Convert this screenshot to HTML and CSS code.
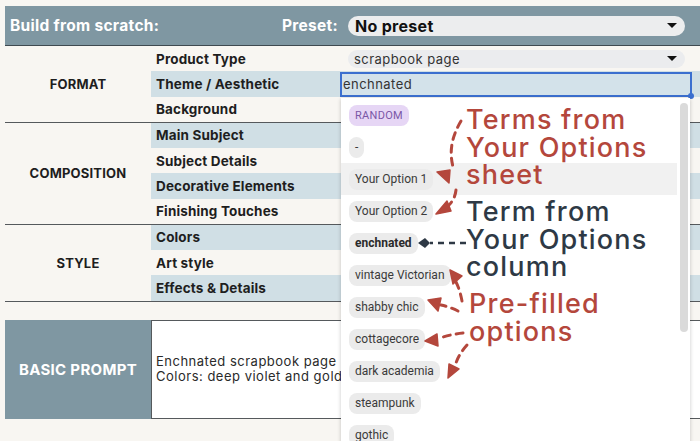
FILE: index.html
```html
<!DOCTYPE html>
<html lang="en">
<head>
<meta charset="utf-8">
<title>Prompt Builder</title>
<link rel="stylesheet" href="styles.css">
</head>
<body>
<main class="page">
  <div class="builder">
    <header class="bar">
      <div class="bar-title">Build from scratch:</div>
      <div class="bar-preset">Preset:</div>
      <div class="bar-cell">
        <div class="bar-select"><span>No preset</span><span class="caret"></span></div>
      </div>
    </header>

    <section class="group g3">
      <div class="group-name">FORMAT</div>
      <div class="field">Product Type</div>
      <div class="value"><div class="select"><span>scrapbook page</span><span class="caret"></span></div></div>
      <div class="field alt">Theme / Aesthetic</div>
      <div class="value alt"><div class="input">enchnated<span class="handle"></span></div></div>
      <div class="field">Background</div>
      <div class="value"></div>
    </section>

    <section class="group g4">
      <div class="group-name">COMPOSITION</div>
      <div class="field alt">Main Subject</div>
      <div class="value alt"></div>
      <div class="field">Subject Details</div>
      <div class="value"></div>
      <div class="field alt">Decorative Elements</div>
      <div class="value alt"></div>
      <div class="field">Finishing Touches</div>
      <div class="value"></div>
    </section>

    <section class="group g3">
      <div class="group-name">STYLE</div>
      <div class="field alt">Colors</div>
      <div class="value alt"></div>
      <div class="field">Art style</div>
      <div class="value"></div>
      <div class="field alt">Effects &amp; Details</div>
      <div class="value alt"></div>
    </section>
  </div>

  <div class="prompt">
    <div class="prompt-label">BASIC PROMPT</div>
    <div class="prompt-text">Enchnated scrapbook page<br>Colors: deep violet and gold</div>
  </div>
</main>

<div class="menu">
  <ul class="menu-list">
    <li class="item"><span class="chip chip-random">RANDOM</span></li>
    <li class="item"><span class="chip">-</span></li>
    <li class="item hover"><span class="chip">Your Option 1</span></li>
    <li class="item"><span class="chip">Your Option 2</span></li>
    <li class="item"><span class="chip chip-bold">enchnated</span></li>
    <li class="item"><span class="chip">vintage Victorian</span></li>
    <li class="item"><span class="chip">shabby chic</span></li>
    <li class="item"><span class="chip">cottagecore</span></li>
    <li class="item"><span class="chip">dark academia</span></li>
    <li class="item"><span class="chip">steampunk</span></li>
    <li class="item"><span class="chip">gothic</span></li>
  </ul>
  <div class="scroll-thumb"></div>
</div>

<div class="note note-sheet">Terms from<br>Your Options<br>sheet</div>
<div class="note note-column">Term from<br>Your Options<br>column</div>
<div class="note note-prefill">Pre-filled<br>options</div>

<svg class="arrows" width="700" height="441" viewBox="0 0 700 441">
  <g class="red-line">
    <path d="M461 121 Q446 146 454 170"/>
    <path d="M456 190 Q455 199 449 205"/>
    <path d="M462 301 Q460 290 456 282"/>
    <path d="M458 311 Q450 307 441 305"/>
    <path d="M463 333 Q452 334 440 338"/>
    <path d="M467 345 Q458 355 455 366"/>
  </g>
  <g class="red-head">
    <polygon points="437,172 450,170 449,183"/>
    <polygon points="436,214 447,201 451,211"/>
    <polygon points="450,270 462,276 453,284"/>
    <polygon points="428,300 441,298 438,311"/>
    <polygon points="425,341 437,334 438,346"/>
    <polygon points="448,378 449,364 459,369"/>
  </g>
  <path class="dark-line" d="M466 243 L430 243"/>
  <polygon class="dark-head" points="418,243 425,238 430,243 425,248"/>
</svg>
</body>
</html>
```

FILE: styles.css
```css
* {
  box-sizing: border-box;
}

html, body {
  margin: 0;
  padding: 0;
}

body {
  width: 700px;
  height: 441px;
  overflow: hidden;
  position: relative;
  background: #f8f6f2;
  font-family: Inter, "Liberation Sans", sans-serif;
  color: #1e1e1e;
}

.page {
  padding: 6px 0 0 5px;
}

/* ---------- top bar ---------- */
.bar {
  display: grid;
  grid-template-columns: 146px 189px 1fr;
  align-items: center;
  height: 40px;
  background: #7f97a2;
  border-bottom: 1px solid #3f4a50;
  color: #fff;
  font-weight: 700;
  font-size: 15.5px;
  letter-spacing: 0.3px;
}

.bar-title {
  padding-left: 5px;
  white-space: nowrap;
}

.bar-preset {
  text-align: right;
  padding-right: 2px;
}

.bar-cell {
  padding: 0 15px 0 8px;
}

.bar-select {
  display: flex;
  align-items: center;
  justify-content: space-between;
  height: 20px;
  padding: 0 8px 0 7px;
  border-radius: 10px;
  background: #ecedee;
  color: #111;
  font-size: 16px;
}

.caret {
  width: 0;
  height: 0;
  border-left: 5px solid transparent;
  border-right: 5px solid transparent;
  border-top: 5px solid #111;
}

/* ---------- field groups ---------- */
.group {
  display: grid;
  grid-template-columns: 146px 189px 1fr;
  border-bottom: 1px solid #55595c;
}

.g3 {
  grid-template-rows: repeat(3, 25.25px);
}

.g4 {
  grid-template-rows: repeat(4, 25.25px);
}

.group-name {
  grid-column: 1;
  grid-row: 1 / -1;
  display: flex;
  align-items: center;
  justify-content: center;
  font-weight: 700;
  font-size: 13px;
  letter-spacing: 0.2px;
}

.field {
  grid-column: 2;
  display: flex;
  align-items: center;
  padding-left: 5px;
  font-weight: 700;
  font-size: 13.5px;
  letter-spacing: 0.15px;
  white-space: nowrap;
}

.value {
  grid-column: 3;
  display: flex;
  align-items: center;
  position: relative;
}

.alt {
  background: #d0dfe5;
}

.select {
  display: flex;
  align-items: center;
  justify-content: space-between;
  width: calc(100% - 23px);
  height: 18px;
  margin-left: 8px;
  padding: 0 8px 0 6px;
  border-radius: 9px;
  background: #ebecee;
  font-size: 13px;
  letter-spacing: 0.45px;
  color: #333;
}

.input {
  position: relative;
  align-self: stretch;
  width: calc(100% - 8px);
  margin-top: 1px;
  padding-left: 1px;
  display: flex;
  align-items: center;
  border: 2px solid #3b6fcf;
  background: #d3e2ea;
  font-size: 13px;
  letter-spacing: 0.45px;
  color: #333;
}

.handle {
  position: absolute;
  right: -4px;
  bottom: -4px;
  width: 6px;
  height: 6px;
  border-radius: 50%;
  background: #3b6fcf;
}

/* ---------- prompt ---------- */
.prompt {
  display: flex;
  margin-top: 18px;
  height: 99px;
}

.prompt-label {
  width: 146px;
  display: flex;
  align-items: center;
  justify-content: center;
  background: #7f97a2;
  color: #fff;
  font-weight: 700;
  font-size: 15px;
  letter-spacing: 0.3px;
}

.prompt-text {
  flex: 1;
  display: flex;
  flex-direction: column;
  justify-content: center;
  padding-left: 4px;
  background: #fff;
  border: 1px solid #55595c;
  border-right: 0;
  font-size: 13px;
  line-height: 15px;
  letter-spacing: 0.5px;
  color: #2a2a2a;
  white-space: nowrap;
  overflow: hidden;
}

/* ---------- dropdown menu ---------- */
.menu {
  position: absolute;
  left: 341px;
  top: 98px;
  width: 349px;
  height: 350px;
  background: #fff;
  box-shadow: 0 1px 4px rgba(0, 0, 0, 0.22);
  overflow: hidden;
}

.menu-list {
  list-style: none;
  margin: 0;
  padding: 1px 0 0;
}

.item {
  display: flex;
  align-items: center;
  height: 32px;
  width: 336px;
  padding-left: 8px;
}

.item.hover {
  background: #f1f1f1;
}

.chip {
  display: inline-flex;
  align-items: center;
  height: 21px;
  padding: 0 6px;
  border-radius: 8px;
  background: #ebebeb;
  font-family: Roboto, "Liberation Sans", sans-serif;
  font-size: 12px;
  color: #3a3a3a;
}

.chip-random {
  background: #e6d6f5;
  color: #7a56a6;
  font-size: 11px;
  letter-spacing: 0.3px;
}

.chip-bold {
  font-weight: 700;
  color: #2a2a2a;
}

.scroll-thumb {
  position: absolute;
  left: 339px;
  top: 5px;
  width: 8px;
  height: 229px;
  border-radius: 4px;
  background: #dadada;
}

/* ---------- callouts ---------- */
.note {
  position: absolute;
  font-family: Inter, "Liberation Sans", sans-serif;
  font-weight: 500;
  font-size: 27px;
  line-height: 27.5px;
  letter-spacing: 1.2px;
  white-space: nowrap;
}

.note-sheet {
  left: 466px;
  top: 106px;
  color: #b4473c;
}

.note-column {
  left: 466px;
  top: 198px;
  color: #2e3945;
}

.note-prefill {
  left: 469px;
  top: 290px;
  color: #b4473c;
}

.arrows {
  position: absolute;
  left: 0;
  top: 0;
  pointer-events: none;
}

.red-line path {
  fill: none;
  stroke: #b4473c;
  stroke-width: 3;
  stroke-dasharray: 7 6;
  stroke-linecap: round;
}

.red-head polygon {
  fill: #b4473c;
  stroke: #b4473c;
  stroke-width: 1.5;
  stroke-linejoin: round;
}

.dark-line {
  fill: none;
  stroke: #2e3945;
  stroke-width: 2.5;
  stroke-dasharray: 6 5;
}

.dark-head {
  fill: #2e3945;
}
```
